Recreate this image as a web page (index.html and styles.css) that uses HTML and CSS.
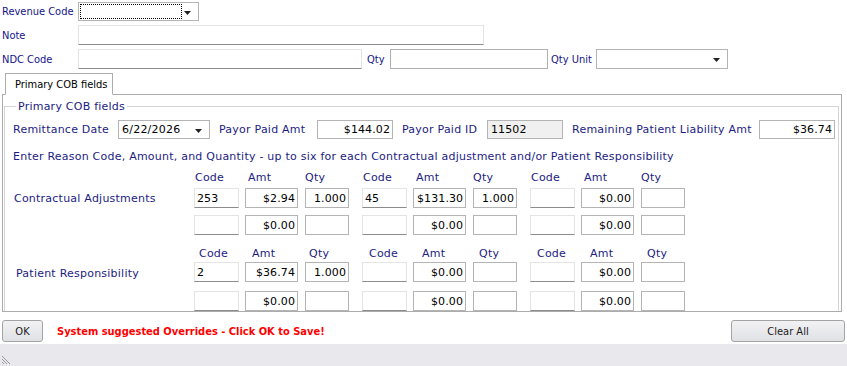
FILE: index.html
```html
<!DOCTYPE html>
<html lang="en">

<head>
  <meta charset="UTF-8">
  <title>Primary COB fields</title>
  <link rel="stylesheet" href="styles.css">
</head>

<body>
  <div class="top">
    <div class="row">
      <span class="lbl lbl-main">Revenue Code</span>
      <div class="combo combo-rev">
        <span class="focus"></span>
        <svg class="arrow" width="7" height="4" viewBox="0 0 7 4"><path d="M0 0H7L3.5 4Z" fill="#222" /></svg>
      </div>
    </div>
    <div class="row">
      <span class="lbl lbl-main">Note</span>
      <input class="tb tb-flat tb-note" />
    </div>
    <div class="row">
      <span class="lbl lbl-main">NDC Code</span>
      <input class="tb tb-flat tb-ndc" />
      <span class="lbl lbl-qty">Qty</span>
      <input class="tb tb-qty" />
      <span class="lbl lbl-unit">Qty Unit</span>
      <div class="combo combo-unit">
        <svg class="arrow" width="7" height="4" viewBox="0 0 7 4"><path d="M0 0H7L3.5 4Z" fill="#222" /></svg>
      </div>
    </div>
  </div>

  <div class="tabs">
    <div class="tab">Primary COB fields</div>
  </div>
  <div class="panel">
    <fieldset class="group">
      <legend>Primary COB fields</legend>

      <div class="remit">
        <span class="rl rl-date">Remittance Date</span>
        <div class="combo combo-date">
          <span class="combo-text">6/22/2026</span>
          <svg class="arrow" width="7" height="4" viewBox="0 0 7 4"><path d="M0 0H7L3.5 4Z" fill="#222" /></svg>
        </div>
        <span class="rl rl-paid">Payor Paid Amt</span>
        <input class="tb tb-amt tb-76" value="$144.02" />
        <span class="rl rl-id">Payor Paid ID</span>
        <input class="tb tb-ro tb-76" value="11502" readonly />
        <span class="rl rl-rem">Remaining Patient Liability Amt</span>
        <input class="tb tb-amt tb-76" value="$36.74" />
      </div>

      <div class="hint">Enter Reason Code, Amount, and Quantity - up to six for each Contractual adjustment and/or Patient Responsibility</div>

      <div class="adj adj-ca">
        <div class="adj-label">Contractual Adjustments</div>
        <div class="adj-grid">
          <div class="heads">
            <div class="grp"><span class="h-code">Code</span><span class="h-amt">Amt</span><span class="h-qty">Qty</span></div>
            <div class="grp"><span class="h-code">Code</span><span class="h-amt">Amt</span><span class="h-qty">Qty</span></div>
            <div class="grp"><span class="h-code">Code</span><span class="h-amt">Amt</span><span class="h-qty">Qty</span></div>
          </div>
          <div class="cells">
            <div class="grp"><input class="tb tb-flat c-code" value="253" /><input class="tb tb-amt c-amt" value="$2.94" /><input class="tb tb-amt c-qty" value="1.000" /></div>
            <div class="grp"><input class="tb tb-flat c-code" value="45" /><input class="tb tb-amt c-amt" value="$131.30" /><input class="tb tb-amt c-qty" value="1.000" /></div>
            <div class="grp"><input class="tb tb-flat c-code" /><input class="tb tb-amt c-amt" value="$0.00" /><input class="tb tb-amt c-qty" /></div>
          </div>
          <div class="cells">
            <div class="grp"><input class="tb tb-flat c-code" /><input class="tb tb-amt c-amt" value="$0.00" /><input class="tb tb-amt c-qty" /></div>
            <div class="grp"><input class="tb tb-flat c-code" /><input class="tb tb-amt c-amt" value="$0.00" /><input class="tb tb-amt c-qty" /></div>
            <div class="grp"><input class="tb tb-flat c-code" /><input class="tb tb-amt c-amt" value="$0.00" /><input class="tb tb-amt c-qty" /></div>
          </div>
        </div>
      </div>

      <div class="adj adj-pr">
        <div class="adj-label">Patient Responsibility</div>
        <div class="adj-grid">
          <div class="heads">
            <div class="grp shift-2"><span class="h-code">Code</span><span class="h-amt">Amt</span><span class="h-qty">Qty</span></div>
            <div class="grp shift-1"><span class="h-code">Code</span><span class="h-amt">Amt</span><span class="h-qty">Qty</span></div>
            <div class="grp"><span class="h-code">Code</span><span class="h-amt">Amt</span><span class="h-qty">Qty</span></div>
          </div>
          <div class="cells">
            <div class="grp"><input class="tb tb-flat c-code" value="2" /><input class="tb tb-amt c-amt" value="$36.74" /><input class="tb tb-amt c-qty" value="1.000" /></div>
            <div class="grp"><input class="tb tb-flat c-code" /><input class="tb tb-amt c-amt" value="$0.00" /><input class="tb tb-amt c-qty" /></div>
            <div class="grp"><input class="tb tb-flat c-code" /><input class="tb tb-amt c-amt" value="$0.00" /><input class="tb tb-amt c-qty" /></div>
          </div>
          <div class="cells">
            <div class="grp"><input class="tb tb-flat c-code" /><input class="tb tb-amt c-amt" value="$0.00" /><input class="tb tb-amt c-qty" /></div>
            <div class="grp"><input class="tb tb-flat c-code" /><input class="tb tb-amt c-amt" value="$0.00" /><input class="tb tb-amt c-qty" /></div>
            <div class="grp"><input class="tb tb-flat c-code" /><input class="tb tb-amt c-amt" value="$0.00" /><input class="tb tb-amt c-qty" /></div>
          </div>
        </div>
      </div>
    </fieldset>
  </div>

  <div class="actions">
    <button class="btn btn-ok">OK</button>
    <span class="warn">System suggested Overrides - Click OK to Save!</span>
    <button class="btn btn-clear">Clear All</button>
  </div>

  <div class="status">
    <svg class="grip" width="10" height="10" viewBox="0 0 10 10">
      <path d="M0 2L8 10M0 5L5 10M0 8L2 10" stroke="#9a9a9a" stroke-width="1" />
    </svg>
  </div>
</body>

</html>
```

FILE: styles.css
```css
body {
  margin: 0;
  width: 847px;
  height: 366px;
  overflow: hidden;
  background: #fff;
  font-family: "DejaVu Sans Condensed", "DejaVu Sans", sans-serif;
  font-stretch: condensed;
  font-size: 11px;
  color: #14148a;
}

.top {
  padding: 2px 0 0 2px;
}

.row {
  display: flex;
  align-items: center;
  height: 20px;
  margin-bottom: 4px;
}

.row:first-child {
  height: 19px;
}

.lbl-main {
  width: 76px;
}

.lbl-qty {
  margin-left: 5px;
  width: 23px;
}

.lbl-unit {
  margin-left: 3px;
  width: 45px;
}

.tb {
  box-sizing: border-box;
  height: 20px;
  margin: 0;
  padding: 0 2px 0 3px;
  border: 1px solid #b4b4b4;
  background: #fff;
  font-family: "DejaVu Sans", sans-serif;
  font-stretch: normal;
  font-size: 11px;
  letter-spacing: 0.1px;
  color: #000;
  outline: none;
}

.tb-flat {
  border-color: #e4e4e4 #e4e4e4 #8c8c8c #e4e4e4;
  padding-left: 2px;
}

.tb-note {
  width: 406px;
}

.tb-ndc {
  width: 284px;
}

.tb-qty {
  width: 158px;
  border-color: #b0b0b0;
}

.combo {
  box-sizing: border-box;
  position: relative;
  display: flex;
  align-items: center;
  height: 20px;
  border: 1px solid #b4b4b4;
  background: #fff;
}

.combo .arrow {
  position: absolute;
  right: 7px;
  top: 8px;
}

.combo-rev {
  width: 121px;
  height: 19px;
}

.combo-rev .focus {
  margin-left: 1px;
  width: 102px;
  height: 15px;
  box-sizing: border-box;
  border: 1px dotted #000;
}

.combo-unit {
  width: 132px;
}

.tabs {
  display: flex;
  padding-left: 5px;
  margin-bottom: -1px;
}

.tab {
  position: relative;
  z-index: 1;
  box-sizing: border-box;
  width: 108px;
  height: 22px;
  padding: 4px 0 0 9px;
  border: 1px solid #acacac;
  border-bottom: 1px solid #fff;
  background: #fff;
  color: #000;
}

.panel {
  box-sizing: border-box;
  width: 840px;
  height: 218px;
  margin-left: 2px;
  border: 1px solid #acacac;
  overflow: hidden;
}

.group {
  margin: 5px 2px 0 1px;
  padding: 7px 0 0 8px;
  border: 1px solid #d5d5d5;
  font-family: "DejaVu Sans", sans-serif;
  font-stretch: normal;
  letter-spacing: 0.23px;
  color: #1c1c82;
}

.group legend {
  padding: 0 2px;
  margin-left: 3px;
  line-height: 13px;
}

.remit {
  display: flex;
  align-items: center;
  height: 19px;
}

.remit .tb {
  height: 19px;
}

.rl-date {
  width: 105px;
}

.rl-paid {
  width: 98px;
  margin-left: 9px;
}

.rl-id {
  width: 85px;
  margin-left: 9px;
}

.rl-rem {
  width: 187px;
  margin-left: 9px;
}

.tb-76 {
  width: 76px;
}

.tb-amt {
  text-align: right;
}

.tb-ro {
  background: #f0f0f0;
}

.combo-date {
  width: 92px;
  height: 19px;
}

.combo-date .combo-text {
  padding-left: 3px;
  color: #000;
}

.hint {
  margin-top: 11px;
  line-height: 14px;
}

.adj {
  display: flex;
}

.adj-label {
  box-sizing: border-box;
  width: 181px;
  padding-left: 1px;
}

.adj-ca {
  margin-top: 7px;
}

.adj-ca .adj-label {
  margin-top: 21px;
}

.adj-pr {
  margin-top: 12px;
}

.adj-pr .adj-label {
  margin-top: 20px;
  padding-left: 3px;
}

.heads,
.cells {
  display: flex;
  gap: 13px;
}

.heads {
  line-height: 14px;
  margin-bottom: 3px;
}

.adj-pr .heads {
  margin-bottom: 1px;
}

.cells + .cells {
  margin-top: 7px;
}

.adj-pr .cells + .cells {
  margin-top: 9px;
}

.grp {
  display: flex;
  width: 155px;
}

.h-code {
  width: 51px;
  padding-left: 1px;
  box-sizing: border-box;
}

.h-amt {
  width: 60px;
  padding-left: 3px;
  box-sizing: border-box;
}

.shift-2 {
  padding-left: 4px;
}

.shift-1 {
  padding-left: 2px;
}

.c-code {
  width: 45px;
  margin-right: 6px;
}

.c-amt {
  width: 53px;
  margin-right: 7px;
}

.c-qty {
  width: 44px;
}

.actions {
  display: flex;
  align-items: center;
  height: 22px;
  margin-top: 8px;
  padding: 0 2px;
}

.btn {
  box-sizing: border-box;
  height: 22px;
  border: 1px solid #a3a3a3;
  border-radius: 3px;
  background: linear-gradient(#f2f2f4, #e0e1e5);
  font-family: "DejaVu Sans Condensed", "DejaVu Sans", sans-serif;
  font-stretch: condensed;
  font-size: 11px;
  color: #1a1a1a;
  padding: 0;
}

.btn-ok {
  width: 41px;
}

.warn {
  margin-left: 14px;
  color: #ff0000;
  font-weight: bold;
  font-size: 11px;
}

.btn-clear {
  width: 114px;
  margin-left: auto;
}

.status {
  height: 22px;
  margin-top: 2px;
  background: #e9e9ed;
  display: flex;
  align-items: flex-end;
  padding: 0 0 2px 2px;
  box-sizing: border-box;
}
```
